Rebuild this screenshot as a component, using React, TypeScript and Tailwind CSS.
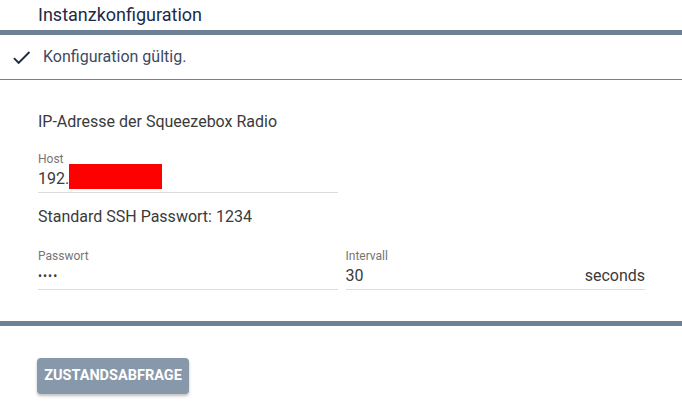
import React from "react";

const Field: React.FC<{ label: string; value: React.ReactNode; suffix?: string }> = ({
  label,
  value,
  suffix,
}) => (
  <div className="border-b border-[#dcdcdc] h-[42px] flex flex-col">
    <span className="text-[12px] leading-[14px] text-[#757575] mt-[1px]">{label}</span>
    <div className="flex items-center justify-between h-[26px] text-[16px] text-[#3a3a3a]">
      <span className="flex items-center">{value}</span>
      {suffix && <span>{suffix}</span>}
    </div>
  </div>
);

export default function App() {
  return (
    <div
      className="w-[682px] h-[419px] bg-white overflow-hidden"
      style={{ fontFamily: "Roboto, 'Liberation Sans', sans-serif" }}
    >
      <div className="h-[30px] flex items-center pl-[38px] text-[18px] text-[#1c2a48] pb-[2px]">
        Instanzkonfiguration
      </div>
      <div className="h-[5px] bg-[#6d8096]" />
      <div className="h-[45px] flex items-center border-b border-[#6d8096]">
        <svg
          width="23"
          height="23"
          viewBox="0 0 24 24"
          className="ml-[10px] mr-[10px] text-[#1c2a48]"
          fill="currentColor"
        >
          <path d="M9 16.17 4.83 12l-1.42 1.41L9 19 21 7l-1.41-1.41z" />
        </svg>
        <span className="text-[16px] text-[#3c4a66]">Konfiguration gültig.</span>
      </div>

      <div className="pl-[38px] pr-[37px]">
        <div className="mt-[32px] text-[16px] text-[#3a3a3a] leading-[20px]">
          IP-Adresse der Squeezebox Radio
        </div>
        <div className="grid grid-cols-2 gap-x-[8px] mt-[19px]">
          <Field
            label="Host"
            value={
              <>
                192.
                <span className="inline-block w-[93px] h-[25px] mb-[5px] bg-[#ff0000]" />
              </>
            }
          />
        </div>
        <div className="mt-[14px] text-[16px] text-[#3a3a3a] leading-[20px]">
          Standard SSH Passwort: 1234
        </div>
        <div className="grid grid-cols-2 gap-x-[8px] mt-[21px]">
          <Field label="Passwort" value={<span className="tracking-[1px] text-[12px]">••••</span>} />
          <Field label="Intervall" value="30" suffix="seconds" />
        </div>
      </div>

      <div className="h-[5px] bg-[#6d8096] mt-[31px]" />

      <div className="pl-[37px] mt-[32px]">
        <button className="w-[152px] h-[36px] rounded-[4px] bg-[#8898ab] text-white font-bold text-[14.5px] uppercase shadow-[0_2px_3px_rgba(0,0,0,0.25)]">
          Zustandsabfrage
        </button>
      </div>
    </div>
  );
}
